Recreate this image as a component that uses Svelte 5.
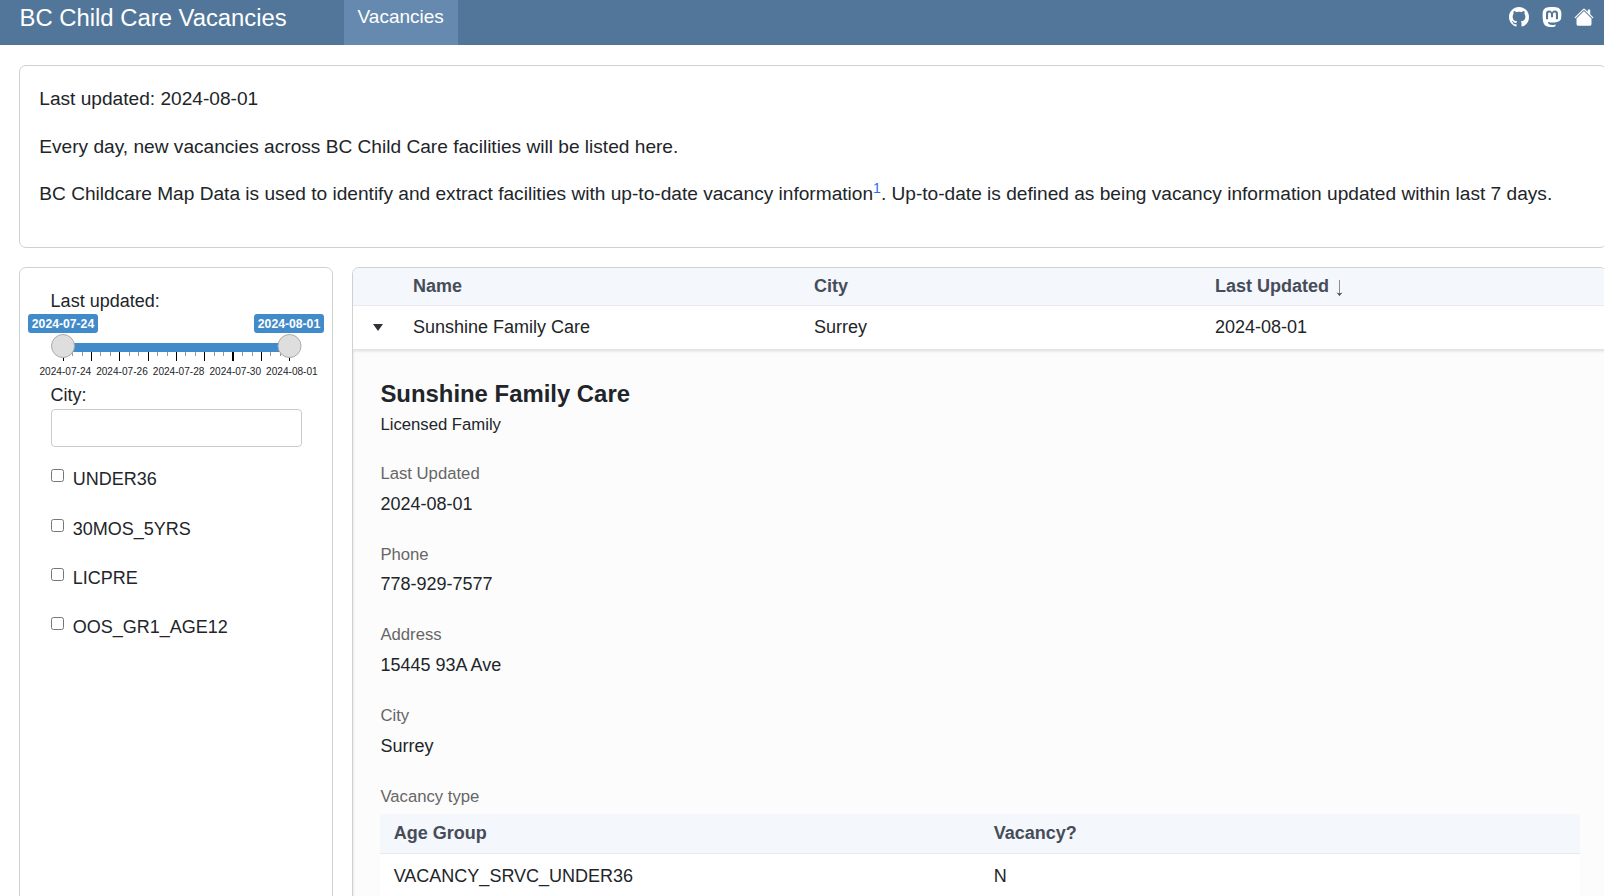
<script>
  const filters = ['UNDER36', '30MOS_5YRS', 'LICPRE', 'OOS_GR1_AGE12'];
  const fields = [
    ['Last Updated', '2024-08-01'],
    ['Phone', '778-929-7577'],
    ['Address', '15445 93A Ave'],
    ['City', 'Surrey']
  ];
  const dates = ['2024-07-24', '2024-07-26', '2024-07-28', '2024-07-30', '2024-08-01'];
  const big = [12, 40, 68, 97, 125, 153, 181, 210, 238];
  const wide = [181];
  const small = [21, 31, 49, 59, 78, 87, 106, 116, 134, 144, 163, 172, 191, 201, 219, 229];
</script>

<div class="page">
  <header>
    <div class="brand">BC Child Care Vacancies</div>
    <nav><a class="tab" href="#vacancies">Vacancies</a></nav>
    <div class="tools">
      <svg width="20" height="20" viewBox="0 0 16 16" fill="#fff"><path d="M8 0C3.58 0 0 3.58 0 8c0 3.54 2.29 6.53 5.47 7.59.4.07.55-.17.55-.38 0-.19-.01-.82-.01-1.49-2.01.37-2.53-.49-2.69-.94-.09-.23-.48-.94-.82-1.13-.28-.15-.68-.52-.01-.53.63-.01 1.08.58 1.23.82.72 1.21 1.87.87 2.33.66.07-.52.28-.87.51-1.07-1.78-.2-3.64-.89-3.64-3.95 0-.87.31-1.59.82-2.15-.08-.2-.36-1.02.08-2.12 0 0 .67-.21 2.2.82.64-.18 1.32-.27 2-.27s1.36.09 2 .27c1.53-1.04 2.2-.82 2.2-.82.44 1.1.16 1.92.08 2.12.51.56.82 1.27.82 2.15 0 3.07-1.87 3.75-3.65 3.95.29.25.54.73.54 1.48 0 1.07-.01 1.93-.01 2.2 0 .21.15.46.55.38A8.01 8.01 0 0 0 16 8c0-4.42-3.58-8-8-8"/></svg>
      <svg width="20" height="20" viewBox="0 0 16 16" fill="#fff"><path d="M11.19 12.195c2.016-.24 3.77-1.475 3.99-2.603.348-1.778.32-4.339.32-4.339 0-3.47-2.286-4.488-2.286-4.488C12.062.238 10.083.017 8.027 0h-.05C5.92.017 3.942.238 2.79.765c0 0-2.285 1.017-2.285 4.488l-.002.662c-.004.64-.007 1.35.011 2.091.083 3.394.626 6.74 3.78 7.57 1.454.383 2.703.463 3.709.408 1.823-.1 2.847-.647 2.847-.647l-.06-1.317s-1.303.41-2.767.36c-1.45-.05-2.98-.156-3.215-1.928a4 4 0 0 1-.033-.496s1.424.346 3.228.428c1.103.05 2.137-.064 3.188-.189zm1.613-2.47H11.13v-4.08c0-.859-.364-1.295-1.091-1.295-.804 0-1.207.517-1.207 1.541v2.233H7.168V5.89c0-1.024-.403-1.541-1.207-1.541-.727 0-1.091.436-1.091 1.296v4.079H3.197V5.522q0-1.288.66-2.046c.456-.505 1.052-.764 1.793-.764.856 0 1.504.328 1.933.983L8 4.39l.417-.695c.429-.655 1.077-.983 1.934-.983.74 0 1.336.259 1.791.764q.662.757.661 2.046z"/></svg>
      <svg width="20" height="20" viewBox="0 0 16 16" fill="#fff"><path d="M8.707 1.5a1 1 0 0 0-1.414 0L.646 8.146a.5.5 0 0 0 .708.708L8 2.207l6.646 6.647a.5.5 0 0 0 .708-.708L13 5.793V2.5a.5.5 0 0 0-.5-.5h-1a.5.5 0 0 0-.5.5v1.293z"/><path d="m8 3.293 6 6V13.500a1.500 1.500 0 0 1-1.500 1.500h-9A1.500 1.500 0 0 1 2 13.500V9.293z"/></svg>
    </div>
  </header>

  <main>
    <section class="card intro">
      <p>Last updated: 2024-08-01</p>
      <p>Every day, new vacancies across BC Child Care facilities will be listed here.</p>
      <p>BC Childcare Map Data is used to identify and extract facilities with up-to-date vacancy information<sup>1</sup>. Up-to-date is defined as being vacancy information updated within last 7 days.</p>
    </section>

    <div class="columns">
      <aside class="card side">
        <div class="lbl">Last updated:</div>
        <div class="slider">
          <div class="tips"><span>2024-07-24</span><span>2024-08-01</span></div>
          <svg class="track" width="251" height="30" viewBox="0 0 251 30">
            <rect x="12" y="9" width="226" height="9" fill="#428bca" />
            {#each small as x}<rect {x} y="18" width="1" height="4" fill="#999" />{/each}
            {#each big as x}<rect {x} y="18" width={wide.includes(x) ? 2 : 1} height="9" fill="#000" />{/each}
            <circle cx="12" cy="12" r="11.500" fill="#dedede" stroke="#ababab" />
            <circle cx="238.500" cy="12" r="11.500" fill="#dedede" stroke="#ababab" />
          </svg>
          <div class="dates">{#each dates as d}<span>{d}</span>{/each}</div>
        </div>
        <div class="lbl city">City:</div>
        <input class="text" type="text" aria-label="City" />
        <div class="checks">
          {#each filters as f}
            <label><input type="checkbox" /><span>{f}</span></label>
          {/each}
        </div>
      </aside>

      <section class="card listing">
        <div class="row head">
          <span></span><span>Name</span><span>City</span>
          <span class="sorted">Last Updated <svg width="7" height="17" viewBox="0 0 7 17"><path d="M3.500 0V14" stroke="#8a8f98" fill="none" /><path d="M.5 12.500 3.500 16 6.500 12.500 3.500 13.500z" fill="#464d59" /></svg></span>
        </div>
        <div class="row body">
          <span class="toggle"><i></i></span><span>Sunshine Family Care</span><span>Surrey</span><span>2024-08-01</span>
        </div>
        <div class="detail">
          <h2>Sunshine Family Care</h2>
          <div class="kind">Licensed Family</div>
          {#each fields as [k, v]}
            <div class="field"><div class="key">{k}</div><div class="val">{v}</div></div>
          {/each}
          <div class="key">Vacancy type</div>
          <div class="sub">
            <div class="subrow subhead"><span>Age Group</span><span>Vacancy?</span></div>
            <div class="subrow"><span>VACANCY_SRVC_UNDER36</span><span>N</span></div>
          </div>
        </div>
      </section>
    </div>
  </main>
</div>

<style>
  :global(body) { margin: 0; overflow: hidden; background: #fff; }
  .page {
    width: 1604px; height: 896px; overflow: hidden;
    font-family: "Liberation Sans", Arial, sans-serif; color: #212529;
    font-size: 18px;
  }
  header { height: 45px; background: #517699; color: #fff; display: flex; align-items: flex-start; padding-left: 19.500px; }
  .brand { font-size: 23.850px; line-height: 36px; width: 324.500px; white-space: nowrap; }
  .tab { display: block; box-sizing: border-box; width: 114px; height: 45px; padding-left: 13.600px; background: #668aaf; color: #fff; font-size: 19px; line-height: 33px; text-decoration: none; }
  .tools { margin-left: auto; padding: 6.500px 10px 0 0; display: flex; gap: 12.500px; }
  main { width: 1588px; padding: 20px 0 0 19px; }
  .card { box-sizing: border-box; border: 1px solid #cfd0d2; border-radius: 7px; background: #fff; }
  .intro { height: 183px; padding: 18.500px 19.300px; font-size: 19.130px; line-height: 28.500px; white-space: nowrap; }
  .intro p { margin: 0 0 18.500px; }
  .intro p:first-child { margin-bottom: 19.500px; }
  sup { font-size: 14px; line-height: 0; color: #2a6df4; }
  .columns { display: flex; gap: 19px; margin-top: 19px; height: 660px; }
  .side { width: 314px; padding: 20px 31px; }
  .lbl { line-height: 26px; margin-left: -.4px; }
  .slider { width: 251px; }
  .tips { display: flex; justify-content: space-between; margin: 0 -22px 0 -23px; }
  .tips span { width: 70px; height: 19px; line-height: 20px; border-radius: 3px; background: #428bca; color: #fff; font-size: 12.200px; font-weight: 600; text-align: center; }
  .track { display: block; margin-top: 1px; }
  .dates { display: flex; gap: 5px; margin: 0 -17px 0 -11.500px; font-size: 10.100px; line-height: 15px; height: 14px; }
  .dates span { white-space: nowrap; }
  .city { margin-top: 4px; }
  .text { display: block; box-sizing: border-box; width: 251px; height: 38px; border: 1px solid #c9cbce; border-radius: 4px; margin-top: 1px; background: #fff; }
  .checks { padding-top: 19.300px; }
  label { display: flex; gap: 8.800px; height: 49.300px; line-height: 27px; }
  label input { width: 13px; height: 13px; margin: 3px 0 0; }
  .listing { flex: 1; overflow: hidden; }
  .row { display: grid; grid-template-columns: 60px 401px 401px 1fr; }
  .head { height: 37px; line-height: 36px; background: #f4f7fc; border-bottom: 1px solid #e6eaef; font-weight: 700; color: #464d59; }
  .sorted svg { vertical-align: -5px; margin-left: 2px; }
  .body { height: 43px; line-height: 43px; }
  .toggle { display: flex; align-items: center; padding-left: 20px; }
  .toggle i { border: 5px solid transparent; border-top: 7px solid #2f3338; border-bottom: 0; }
  .detail { height: 560px; padding: 29px 26px 0 27.400px; background: #fcfcfc; border-top: 1px solid #e3e4e5; box-shadow: inset 0 1px 3px #dbdbdb; }
  h2 { margin: 0; font-size: 23.900px; line-height: 29px; }
  .kind { font-size: 16.700px; line-height: 25px; margin: 4px 0 24px; }
  .field { height: 80.700px; }
  .key { font-size: 16.700px; line-height: 25px; color: #666; }
  .val { line-height: 27px; margin-top: 4.600px; }
  .sub { background: #fff; margin-top: 5px; margin-left: -.4px; }
  .subrow { display: grid; grid-template-columns: 1fr 1fr; height: 44px; line-height: 44px; }
  .subrow span { padding-left: 13.700px; }
  .subhead { height: 39px; line-height: 38px; background: #f4f7fc; border-bottom: 1px solid #e6eaef; font-weight: 700; color: #464d59; }
</style>
